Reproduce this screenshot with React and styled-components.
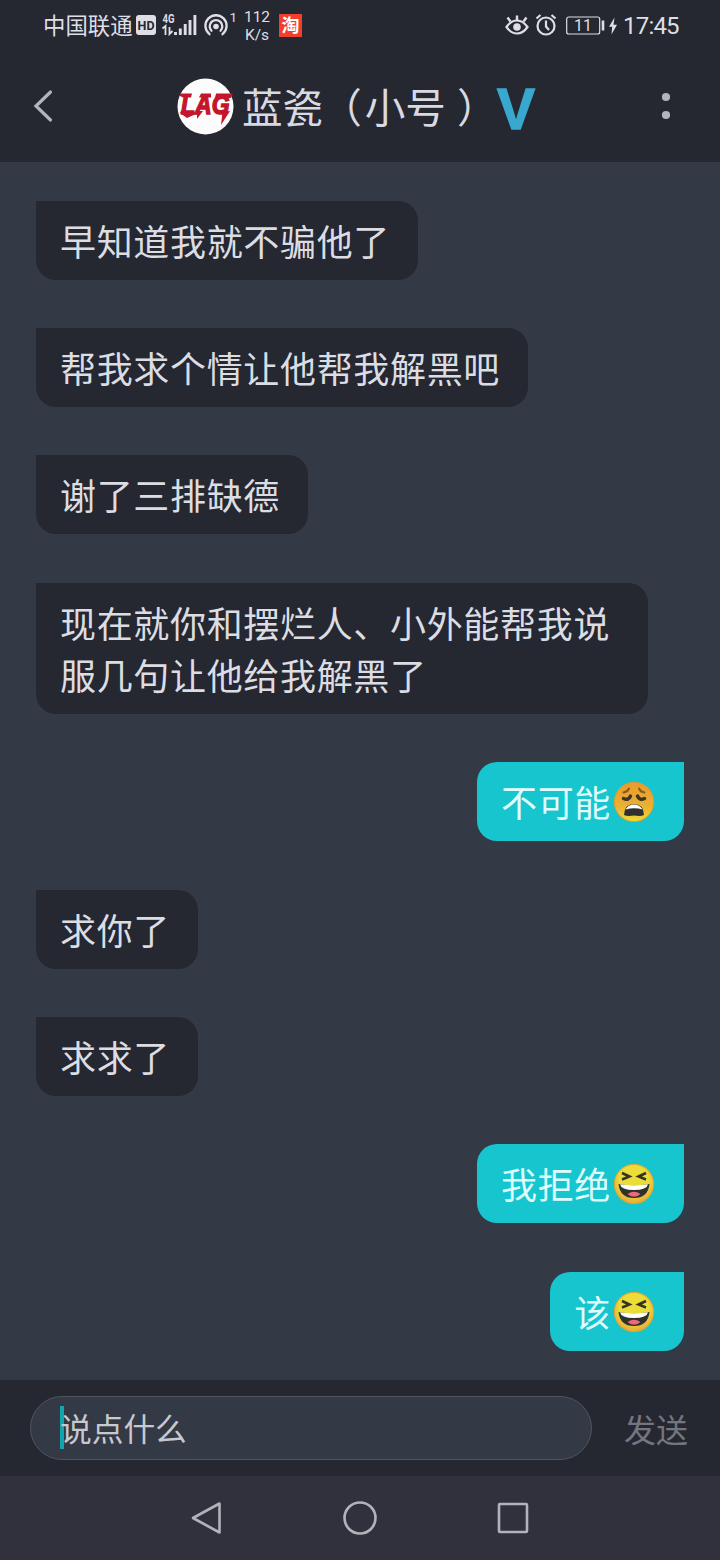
import React from "react";
import styled, { createGlobalStyle } from "styled-components";

const Global = createGlobalStyle`
  * { box-sizing: border-box; }
  body { margin: 0; background: #343946; }
`;

const Screen = styled.div`
  width: 720px;
  height: 1560px;
  display: flex;
  flex-direction: column;
  overflow: hidden;
  background: #343946;
  color: #dcdde4;
  font-family: Roboto, "Noto Sans CJK SC", sans-serif;
  svg { display: block; flex: none; }
`;

const StatusBar = styled.div`
  height: 52px;
  flex: none;
  display: flex;
  align-items: center;
  justify-content: space-between;
  padding: 0 41px 2px 43px;
  background: #252731;
  color: #dedfe6;
`;

const StatusGroup = styled.div`
  display: flex;
  align-items: center;
`;

const Carrier = styled.span`
  width: 93px;
  padding-top: 2px;
  font-size: 22.4px;
  line-height: 30px;
  white-space: nowrap;
`;

const Speed = styled.div`
  width: 30px;
  margin: 0 7px 0 -3px;
  font-size: 15.5px;
  line-height: 18px;
  text-align: center;
  padding-top: 2px;
`;

const Clock = styled.span`
  width: 56px;
  margin-left: 5px;
  padding-top: 2px;
  font-size: 24px;
  letter-spacing: -0.8px;
  line-height: 30px;
  white-space: nowrap;
`;

const Header = styled.header`
  height: 110px;
  flex: none;
  display: flex;
  align-items: center;
  justify-content: space-between;
  padding: 0 49px 2px 33px;
  background: #252731;
`;

const Title = styled.div`
  display: flex;
  align-items: center;
  height: 60px;
  width: 362px;
  margin-right: -2px;
`;

const Name = styled.h1`
  width: 256px;
  margin: 0 0 0 8px;
  padding-top: 6px;
  font-weight: 400;
  font-size: 40.6px;
  line-height: 54px;
  white-space: nowrap;
  color: #d9dae1;
`;

const Open = styled.span`
  margin: 0 3px 0 -2px;
`;

const Close = styled.span`
  margin-left: 11px;
`;

const Verified = styled.span`
  width: 40px;
  margin-left: -1px;
  padding-top: 6px;
  font-family: "Liberation Sans", sans-serif;
  font-weight: 700;
  font-size: 57px;
  line-height: 56px;
  color: #39a8cf;
  -webkit-text-stroke: 1.4px #39a8cf;
`;

const Messages = styled.main`
  flex: 1;
  min-height: 0;
  overflow: hidden;
  display: flex;
  flex-direction: column;
  align-items: flex-start;
  gap: 48.4px;
  padding: 38.6px 36px 0;
`;

const Bubble = styled.div`
  display: flex;
  flex: none;
  align-items: center;
  align-self: ${(p) => (p.$mine ? "flex-end" : "flex-start")};
  width: ${(p) => (p.$full ? "612px" : "auto")};
  min-height: 79px;
  padding: 13px ${(p) => (p.$mine ? 29 : 26)}px 14px 24px;
  border-radius: ${(p) => (p.$mine ? "20px 0 20px 20px" : "0 20px 20px 20px")};
  background: ${(p) => (p.$mine ? "#17c5cf" : "#252731")};
  color: ${(p) => (p.$mine ? "#dffcfd" : "#dcdde3")};
  font-family: "Noto Sans CJK SC", sans-serif;
  font-size: 36px;
  letter-spacing: 0.67px;
  line-height: 52px;
  svg { margin-top: 2px; }
`;

const Line = styled.span`
  display: block;
  white-space: nowrap;
  padding-right: 2px;
`;

const Composer = styled.footer`
  height: 96px;
  flex: none;
  display: flex;
  align-items: center;
  padding: 0 30px;
  background: #252731;
`;

const Field = styled.div`
  width: 562px;
  height: 64px;
  display: flex;
  align-items: center;
  padding-left: 29px;
  border: 1px solid #50545f;
  border-radius: 32px;
  background: #343946;
`;

const Caret = styled.span`
  width: 4px;
  height: 43px;
  margin: 0 -4px 1px 0;
  background: #12a5ae;
`;

const Placeholder = styled.span`
  padding-top: 6px;
  font-size: 31.7px;
  line-height: 46px;
  color: #c7c9ce;
`;

const Send = styled.span`
  margin-left: 32px;
  padding-top: 5px;
  font-size: 32px;
  line-height: 46px;
  color: #74767f;
`;

const NavBar = styled.nav`
  height: 84px;
  flex: none;
  display: flex;
  justify-content: center;
  align-items: center;
  gap: 118px;
  padding-right: 1px;
  background: #30313c;
`;

function StatusLeftIcons() {
  return (
    <svg width="109" height="30" viewBox="0 0 109 30">
      <rect x="0" y="5" width="20" height="20" rx="3" fill="#dedfe6" />
      <text x="10" y="19.600" fontSize="12.500" fontWeight="700" textAnchor="middle" textLength="17" fill="#252731">HD</text>
      <text x="26.500" y="13" fontSize="12.500" fontWeight="700" textLength="12" lengthAdjust="spacingAndGlyphs" fill="#dedfe6">4G</text>
      <path d="M26.500 18.500l3-2.500v9M33.500 17v7l3-3" fill="none" stroke="#dedfe6" strokeWidth="1.800" />
      <path d="M39.500 22v3M44.300 18.500v6.500M49.200 14v11M54 10v15M58.900 5v20" stroke="#dedfe6" strokeWidth="2.900" />
      <g fill="none" stroke="#dedfe6" strokeWidth="2.300" strokeLinecap="round">
        <path d="M73.500 24.200a10.600 10.600 0 1 1 13 0" />
        <path d="M75.500 20.800a6.300 6.300 0 1 1 9 0" />
      </g>
      <circle cx="80" cy="16.500" r="2.800" fill="#dedfe6" />
      <text x="93.500" y="12" fontSize="13.500" fill="#dedfe6">1</text>
    </svg>
  );
}

function TaoIcon() {
  return (
    <svg width="23" height="23" viewBox="0 0 23 23">
      <rect width="23" height="23" fill="#f23e2b" />
      <text x="11.500" y="18" fontSize="18" fontWeight="700" textAnchor="middle" fill="#fff">淘</text>
    </svg>
  );
}

function StatusRightIcons() {
  return (
    <svg width="113" height="30" viewBox="0 0 113 30" fill="none" stroke="#dedfe6">
      <path d="M1.500 17Q6 10.500 12 10.500t10.500 6.500Q18 23.500 12 23.500T1.500 17Z" strokeWidth="2.200" />
      <circle cx="12" cy="17" r="3.800" fill="#dedfe6" stroke="none" />
      <path d="M12 10V5.500M5.500 11.500L2.500 7.500M18.500 11.500l3-4" strokeWidth="2.400" />
      <circle cx="41" cy="16" r="8.500" strokeWidth="2.200" />
      <path d="M41 10.500v6l3 3.500M31.500 8.500l4-3.500M50.500 8.500l-4-3.500" strokeWidth="2.200" />
      <rect x="61.700" y="7" width="33" height="17" rx="2" strokeWidth="1.200" />
      <text x="78" y="21" fontSize="16" textAnchor="middle" textLength="18" fill="#dedfe6" stroke="none">11</text>
      <path d="M98 10.500v10" strokeWidth="2.600" />
      <path d="M109.500 7.500L104 16.700h3.200L106.500 24.500l5.500-9.800h-3.500Z" fill="#dedfe6" stroke="none" />
    </svg>
  );
}

function Avatar() {
  return (
    <svg width="57" height="57" viewBox="0 0 57 57">
      <circle cx="28.500" cy="28.500" r="28" fill="#fdfcfd" />
      <g fill="#c4152d">
        <text
          transform="translate(4 36) scale(1 1.200)" fontFamily="Liberation Sans, sans-serif" fontSize="23"
          fontWeight="700" fontStyle="italic" stroke="#c4152d" strokeWidth="1.200"
        >LAG</text>
        <path d="M3 15.500h12l-1 4H6L2 17.500ZM24 15.500h10v4H22ZM39 15.500h17l-2 4.500H38ZM4 33l-1 2 7 5 9-4-2-3ZM20 33v8l6-8ZM45.500 34L44 47l9-14Z" />
      </g>
    </svg>
  );
}

function BackIcon() {
  return (
    <svg width="20" height="34" viewBox="0 0 20 34">
      <path d="M17.500 3L3 17l14.500 14" fill="none" stroke="#b4b5bb" strokeWidth="3.200" strokeLinecap="round" />
    </svg>
  );
}

function MoreIcon() {
  return (
    <svg width="10" height="28" viewBox="0 0 10 28" fill="#b4b5bb">
      <circle cx="5" cy="5" r="4.100" />
      <circle cx="5" cy="23" r="4.100" />
    </svg>
  );
}

function Weary() {
  return (
    <svg width="42" height="42" viewBox="0 0 42 42" role="img" aria-label="😩">
      <defs>
        <linearGradient id="weary" x1="0" y1="0" x2="0" y2="1">
          <stop offset="0" stopColor="#e99b2b" />
          <stop offset=".6" stopColor="#eab032" />
          <stop offset="1" stopColor="#ebdc36" />
        </linearGradient>
      </defs>
      <circle cx="21" cy="21" r="19.700" fill="url(#weary)" stroke="#dd9a35" strokeWidth="1" />
      <g fill="none" stroke="#3b3427" strokeLinecap="round">
        <path d="M10.500 11.500q4-.5 5.500-4M31.500 11.500q-4-.5-5.500-4" stroke="#8a5b20" strokeWidth="2" />
        <path d="M10.500 17.500q5 2.500 7-2.500M31.500 17.500q-5 2.500-7-2.500" strokeWidth="3.500" />
      </g>
      <path d="M11 34Q11.500 23 21 23t10 11q-3 1.500-10 .5-7 1-10-.5Z" fill="#30302c" />
      <path d="M12.500 28.500Q15.500 23.500 21 23.500t8.500 5q-8-2.500-17 0Z" fill="#fff" />
    </svg>
  );
}

function Laughing() {
  return (
    <svg width="42" height="42" viewBox="0 0 42 42" role="img" aria-label="😆">
      <defs>
        <radialGradient id="laugh" cx=".5" cy=".4" r=".6">
          <stop offset=".6" stopColor="#ebdc37" />
          <stop offset="1" stopColor="#e8a934" />
        </radialGradient>
      </defs>
      <circle cx="21" cy="21" r="19.700" fill="url(#laugh)" stroke="#dda436" strokeWidth="1" />
      <path d="M9 10l7.500 3.500L9 16.500M33 10l-7.500 3.500 7.500 3" fill="none" stroke="#34322a" strokeWidth="2.500" />
      <path d="M5.500 21q15.500 2.500 31 0Q35 35 21 35T5.500 21Z" fill="#30302c" />
      <path d="M7 21.200q14 2.300 28 0-1 5.800-14 5.800T7 21.200Z" fill="#fff" />
      <path d="M14.500 31Q21 26.500 27.500 31 25 33.700 21 33.700T14.500 31Z" fill="#ef6878" />
    </svg>
  );
}

const messages = [
  { lines: ["早知道我就不骗他了"] },
  { lines: ["帮我求个情让他帮我解黑吧"] },
  { lines: ["谢了三排缺德"] },
  { lines: ["现在就你和摆烂人、小外能帮我说", "服几句让他给我解黑了"] },
  { mine: true, lines: ["不可能"], Emoji: Weary },
  { lines: ["求你了"] },
  { lines: ["求求了"] },
  { mine: true, lines: ["我拒绝"], Emoji: Laughing },
  { mine: true, lines: ["该"], Emoji: Laughing },
];

export default function App() {
  return (
    <Screen>
      <Global />
      <StatusBar>
        <StatusGroup>
          <Carrier>中国联通</Carrier>
          <StatusLeftIcons />
          <Speed>112<br />K/s</Speed>
          <TaoIcon />
        </StatusGroup>
        <StatusGroup>
          <StatusRightIcons />
          <Clock>17:45</Clock>
        </StatusGroup>
      </StatusBar>
      <Header>
        <BackIcon />
        <Title>
          <Avatar />
          <Name>蓝瓷<Open>（</Open>小号<Close>）</Close></Name>
          <Verified>V</Verified>
        </Title>
        <MoreIcon />
      </Header>
      <Messages>
        {messages.map(({ mine, lines, Emoji }, i) => (
          <Bubble key={i} $mine={mine} $full={lines.length > 1}>
            <div>
              {lines.map((line) => <Line key={line}>{line}</Line>)}
            </div>
            {Emoji && <Emoji />}
          </Bubble>
        ))}
      </Messages>
      <Composer>
        <Field><Caret /><Placeholder>说点什么</Placeholder></Field>
        <Send>发送</Send>
      </Composer>
      <NavBar>
        <svg width="34" height="36" viewBox="0 0 34 36">
          <path d="M29.500 3.500v29L3 18Z" fill="none" stroke="#b2b3b9" strokeWidth="2.600" strokeLinejoin="round" />
        </svg>
        <svg width="36" height="36" viewBox="0 0 36 36">
          <circle cx="18" cy="18" r="15.500" fill="none" stroke="#b2b3b9" strokeWidth="2.600" />
        </svg>
        <svg width="34" height="36" viewBox="0 0 34 36">
          <rect x="3" y="4" width="28" height="28" rx="1" fill="none" stroke="#b2b3b9" strokeWidth="2.600" />
        </svg>
      </NavBar>
    </Screen>
  );
}
